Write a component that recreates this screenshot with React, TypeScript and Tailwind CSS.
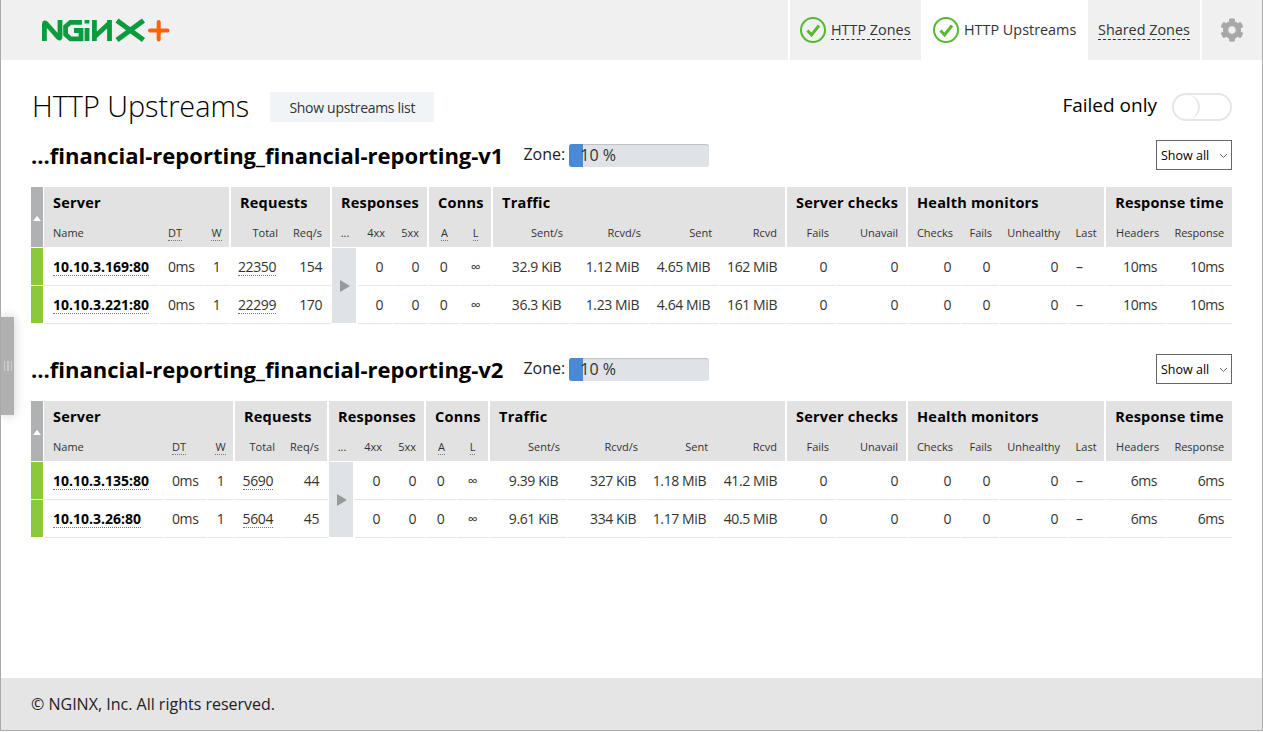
import React from "react";
import { FaCog } from "react-icons/fa";

const colsA = ["w-[13px]","w-[116px]","w-[44px]","w-[27px]","w-[55px]","w-[46px]","w-[26px]","w-[35px]","w-[36px]","w-[31px]","w-[33px]","w-[78px]","w-[78px]","w-[71px]","w-[67px]","w-[50px]","w-[71px]","w-[53px]","w-[39px]","w-[68px]","w-[38px]","w-[61px]","w-[65px]"];
const colsB = ["w-[13px]","w-[120px]","w-[44px]","w-[27px]","w-[48px]","w-[46px]","w-[26px]","w-[35px]","w-[36px]","w-[31px]","w-[33px]","w-[78px]","w-[78px]","w-[70px]","w-[71px]","w-[50px]","w-[71px]","w-[53px]","w-[39px]","w-[68px]","w-[38px]","w-[61px]","w-[65px]"];

type Row = { name: string; total: string; reqs: string; sents: string; rcvds: string; sent: string; rcvd: string; hdr: string; resp: string };

const Check = () => (
  <svg width="26" height="26" viewBox="0 0 26 26" className="shrink-0">
    <circle cx="13" cy="13" r="12" fill="none" stroke="#55b82e" strokeWidth="2" />
    <path d="M7.5 13.5 L11.5 18 L19 8.5" fill="none" stroke="#55b82e" strokeWidth="3" />
  </svg>
);

const Logo = () => (
  <svg width="130" height="25" viewBox="41 18 130 25" fill="none" strokeWidth="4.8">
    <g stroke="#0a9b3c">
      <path d="M44.4 41 V24 Q44.4 22 46 23.5 L58.5 37.5 Q60 39 60 37 V20" />
      <path d="M82 22.3 H70.5 L65.6 26.5 V34.5 L70.5 38.8 H81 V30.5 H74" />
      <path d="M87 28 V41" />
      <path d="M87 20 V23.5" />
      <path d="M94.4 41 V20 M94.4 37 L109.5 23 M109.5 20 V41" />
      <path d="M117 20.5 L143.5 40 M143.5 20.5 L117 40" strokeWidth="5.2" />
    </g>
    <path d="M150 30.5 H167.5 M158.7 22 V39.5" stroke="#ff6200" strokeWidth="4" strokeLinecap="round" />
  </svg>
);

const thGroup = "h-[30px] bg-[#e2e2e2] border-white pl-[9px] pt-[1px] text-left text-[14.5px] tracking-[0.2px] font-bold text-black whitespace-nowrap align-middle";
const thSub = "h-[31px] bg-[#e2e2e2] border-b border-white text-[11px] font-normal text-[#333] whitespace-nowrap align-middle pt-[2px]";
const gap = " border-r-2 border-r-white";
const r = " text-right pr-2";
const td = "h-[38px] border-b border-b-[#e6e6e6] border-r-white text-[14px] tracking-[-0.4px] text-[#333] whitespace-nowrap align-middle";
const tdr = td + " border-r-2 pr-2 text-right";
const tdl = td + " border-r-2 pl-2 text-left";
const tdc = td + " border-r-2 text-center";

const Dot = ({ children, className = "" }: { children: React.ReactNode; className?: string }) => (
  <span className={"inline-block border-b border-dotted border-[#777] " + className}>{children}</span>
);

function Table({ cols, rows }: { cols: string[]; rows: Row[] }) {
  return (
    <table className="w-[1201px] table-fixed border-separate border-spacing-0">
      <colgroup>
        {cols.map((c, i) => (
          <col key={i} className={c} />
        ))}
      </colgroup>
      <thead>
        <tr>
          <th rowSpan={2} className="bg-[#b0b1b3] border-r border-b border-white align-middle p-0">
            <div className="mx-auto mt-[2px] h-0 w-0 border-x-[4px] border-b-[5px] border-x-transparent border-b-white" />
          </th>
          <th colSpan={3} className={thGroup + gap}>Server</th>
          <th colSpan={2} className={thGroup + gap}>Requests</th>
          <th colSpan={3} className={thGroup + gap}>Responses</th>
          <th colSpan={2} className={thGroup + gap}>Conns</th>
          <th colSpan={4} className={thGroup + gap}>Traffic</th>
          <th colSpan={2} className={thGroup + gap}>Server checks</th>
          <th colSpan={4} className={thGroup + gap}>Health monitors</th>
          <th colSpan={2} className={thGroup}>Response time</th>
        </tr>
        <tr>
          <th className={thSub + " text-left pl-[9px]"}>Name</th>
          <th className={thSub + " text-left pl-2"}><Dot className="leading-[14px]">DT</Dot></th>
          <th className={thSub + " text-center" + gap}><Dot className="leading-[14px]">W</Dot></th>
          <th className={thSub + r}>Total</th>
          <th className={thSub + r + gap}>Req/s</th>
          <th className={thSub + " text-center"}>...</th>
          <th className={thSub + r}>4xx</th>
          <th className={thSub + r + gap}>5xx</th>
          <th className={thSub + " text-center"}><Dot className="leading-[14px]">A</Dot></th>
          <th className={thSub + " text-center" + gap}><Dot className="leading-[14px]">L</Dot></th>
          <th className={thSub + r}>Sent/s</th>
          <th className={thSub + r}>Rcvd/s</th>
          <th className={thSub + r}>Sent</th>
          <th className={thSub + r + gap}>Rcvd</th>
          <th className={thSub + r}>Fails</th>
          <th className={thSub + r + gap}>Unavail</th>
          <th className={thSub + r}>Checks</th>
          <th className={thSub + r}>Fails</th>
          <th className={thSub + r}>Unhealthy</th>
          <th className={thSub + " text-center" + gap}>Last</th>
          <th className={thSub + r}>Headers</th>
          <th className={thSub + r}>Response</th>
        </tr>
      </thead>
      <tbody>
        {rows.map((d, i) => (
          <tr key={d.name}>
            <td className="h-[38px] bg-[#8cc83c] border-b border-r border-white p-0" />
            <td className={"h-[38px] border-b border-b-[#e6e6e6] border-r-2 border-r-white text-[14px] font-bold text-black whitespace-nowrap pl-[9px] text-left align-middle"}>
              <Dot className="leading-[17px]">{d.name}</Dot>
            </td>
            <td className={tdl}>0ms</td>
            <td className={tdc}>1</td>
            <td className={tdr}><Dot className="leading-[17px]">{d.total}</Dot></td>
            <td className={tdr}>{d.reqs}</td>
            {i === 0 && (
              <td rowSpan={2} className="bg-[#dfe2e6] border-r-2 border-b border-white p-0 align-middle">
                <div className="ml-[8px] h-0 w-0 border-y-[6px] border-l-[10px] border-y-transparent border-l-[#999]" />
              </td>
            )}
            <td className={tdr}>0</td>
            <td className={tdr}>0</td>
            <td className={tdc}>0</td>
            <td className={tdc}>∞</td>
            <td className={tdr}>{d.sents}</td>
            <td className={tdr}>{d.rcvds}</td>
            <td className={tdr}>{d.sent}</td>
            <td className={tdr}>{d.rcvd}</td>
            <td className={tdr}>0</td>
            <td className={tdr}>0</td>
            <td className={tdr}>0</td>
            <td className={tdr}>0</td>
            <td className={tdr}>0</td>
            <td className={tdl}>–</td>
            <td className={tdr}>{d.hdr}</td>
            <td className={td + " pr-2 text-right"}>{d.resp}</td>
          </tr>
        ))}
      </tbody>
    </table>
  );
}

function Section({ title, cols, rows, className }: { title: string; cols: string[]; rows: Row[]; className: string }) {
  return (
    <section className={className}>
      <div className="mb-[17px] flex h-[30px] items-center">
        <h2 className="text-[22px] font-bold text-black whitespace-nowrap leading-[30px]">{title}</h2>
        <span className="ml-[20px] mr-[4px] text-[16px] text-[#222] -mt-[3px]">Zone:</span>
        <div className="relative h-[23px] w-[140px] overflow-hidden rounded-[3px] bg-[#dfe2e6] shadow-[inset_0_1px_1px_rgba(0,0,0,0.15)]">
          <div className="h-full w-[14px] bg-[#4a8ad4]" />
          <span className="absolute left-[11px] top-0 text-[16px] leading-[23px] text-[#333]">10 %</span>
        </div>
        <div className="ml-auto flex h-[30px] w-[76px] items-center border border-[#666] pl-[4px] pt-[2px] text-[12.5px] text-black">
          <span>Show all</span>
          <svg width="9" height="6" viewBox="0 0 9 6" className="ml-[10px]" fill="none" stroke="#666"><path d="M1 1 L4.5 4.5 L8 1" /></svg>
        </div>
      </div>
      <Table cols={cols} rows={rows} />
    </section>
  );
}

export default function App() {
  const rowsA: Row[] = [
    { name: "10.10.3.169:80", total: "22350", reqs: "154", sents: "32.9 KiB", rcvds: "1.12 MiB", sent: "4.65 MiB", rcvd: "162 MiB", hdr: "10ms", resp: "10ms" },
    { name: "10.10.3.221:80", total: "22299", reqs: "170", sents: "36.3 KiB", rcvds: "1.23 MiB", sent: "4.64 MiB", rcvd: "161 MiB", hdr: "10ms", resp: "10ms" },
  ];
  const rowsB: Row[] = [
    { name: "10.10.3.135:80", total: "5690", reqs: "44", sents: "9.39 KiB", rcvds: "327 KiB", sent: "1.18 MiB", rcvd: "41.2 MiB", hdr: "6ms", resp: "6ms" },
    { name: "10.10.3.26:80", total: "5604", reqs: "45", sents: "9.61 KiB", rcvds: "334 KiB", sent: "1.17 MiB", rcvd: "40.5 MiB", hdr: "6ms", resp: "6ms" },
  ];
  return (
    <div className="relative flex h-[731px] flex-col overflow-hidden border-x border-b border-[#aaa] bg-white font-['Open_Sans',sans-serif]">
      <header className="flex h-[60px] shrink-0 bg-[#f0f0f0]">
        <div className="ml-[40px] mt-[18px]"><Logo /></div>
        <nav className="ml-auto flex h-[60px]">
          <div className="flex w-[133px] items-center border-l-2 border-white pl-[10px] text-[14.4px] text-[#333]">
            <Check />
            <span className="ml-[5px] border-b border-dashed border-[#333] leading-[18px]">HTTP Zones</span>
          </div>
          <div className="flex w-[167px] items-center bg-white pl-[12px] text-[14.4px] text-[#333]">
            <Check />
            <span className="ml-[5px] leading-[18px]">HTTP Upstreams</span>
          </div>
          <div className="flex w-[112px] items-center pl-[10px] text-[14.4px] text-[#333]">
            <span className="border-b border-dashed border-[#333] leading-[18px]">Shared Zones</span>
          </div>
          <div className="flex w-[62px] items-center justify-center border-l-2 border-white">
            <FaCog size={24} color="#a8a8a8" />
          </div>
        </nav>
      </header>

      <main className="flex-1 px-[30px] pt-[32px]">
        <div className="mb-[18px] flex h-[30px] items-center">
          <h1 className="-mt-[3px] ml-[1px] text-[28.8px] font-light leading-[30px] text-black whitespace-nowrap">HTTP Upstreams</h1>
          <button className="ml-[21px] h-[30px] w-[164px] bg-[#f0f4f7] text-[14px] tracking-[-0.3px] text-[#333]">Show upstreams list</button>
          <span className="ml-auto text-[19px] text-black -mt-[3px]">Failed only</span>
          <div className="ml-[15px] h-[28px] w-[60px] rounded-full border-2 border-[#e6e6e6] bg-white">
            <div className="h-[24px] w-[26px] rounded-full border-r-2 border-[#e6e6e6]" />
          </div>
        </div>
        <Section className="mb-[30px]" title="...financial-reporting_financial-reporting-v1" cols={colsA} rows={rowsA} />
        <Section className="" title="...financial-reporting_financial-reporting-v2" cols={colsB} rows={rowsB} />
      </main>

      <footer className="flex h-[52px] shrink-0 items-center bg-[#e5e5e5] pl-[30px] text-[16px] text-[#222]">
        © NGINX, Inc. All rights reserved.
      </footer>

      <div className="absolute left-0 top-[317px] flex h-[98px] w-[13px] items-center justify-center bg-[#b0b0b0] shadow-[0_0_12px_rgba(0,0,0,0.2)]">
        <div className="h-[10px] w-[8px] border-x border-[#ccc] bg-[linear-gradient(90deg,transparent_35%,#ccc_35%,#ccc_65%,transparent_65%)]" />
      </div>
    </div>
  );
}
